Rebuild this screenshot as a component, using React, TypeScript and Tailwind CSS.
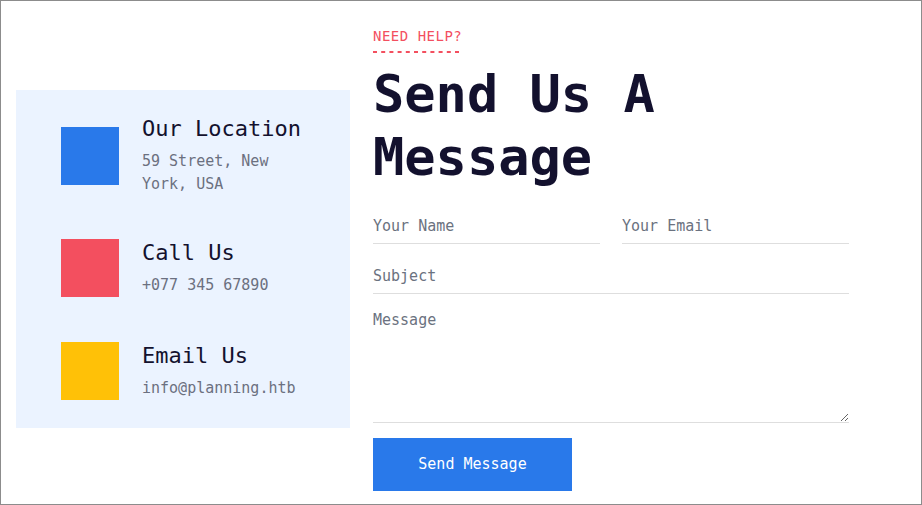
import React from 'react';

const mono = { fontFamily: '"DejaVu Sans Mono", "Liberation Mono", monospace' };

interface InfoItemProps {
  color: string;
  title: string;
  lines: string;
  className?: string;
}

const InfoItem = ({ color, title, lines, className = '' }: InfoItemProps) => (
  <div className={`flex items-center gap-[23px] ${className}`}>
    <div className={`w-[58px] h-[58px] shrink-0 ${color}`} />
    <div className="flex flex-col">
      <h3 className="text-[22px] leading-[28px] text-[#13112e] mb-[7px]">{title}</h3>
      <p className="text-[15px] leading-[23px] text-[#6b7080]">{lines}</p>
    </div>
  </div>
);

const fieldCls =
  'w-full bg-transparent border-b border-[#dedede] text-[15px] text-[#13112e] placeholder:text-[#6b7280] focus:outline-none';

export default function App() {
  return (
    <div
      className="w-[922px] h-[505px] border border-[#8c8c8c] bg-white flex overflow-hidden"
      style={mono}
    >
      <div className="pl-[15px] pt-[89px]">
        <div className="w-[334px] bg-[#ebf3ff] pl-[45px] pr-[45px] pt-[25px] pb-[28px] flex flex-col">
          <InfoItem color="bg-[#2979ea]" title="Our Location" lines="59 Street, New York, USA" />
          <InfoItem className="mt-[43px]" color="bg-[#f34f5f]" title="Call Us" lines="+077 345 67890" />
          <InfoItem className="mt-[45px]" color="bg-[#ffc107]" title="Email Us" lines="info@planning.htb" />
        </div>
      </div>

      <div className="ml-[23px] pt-[25px] w-[476px] flex flex-col">
        <div className="flex flex-col items-start">
          <span className="text-[14px] leading-5 tracking-[0.5px] text-[#f34f5f]">NEED HELP?</span>
          <svg width="90" height="2" className="mt-[5px]">
            <line x1="0" y1="1" x2="90" y2="1" stroke="#f34f5f" strokeWidth="2" strokeDasharray="4 4.2" />
          </svg>
        </div>
        <h1 className="mt-[10px] text-[52px] leading-[63px] font-bold text-[#13112e]">
          Send Us A<br />Message
        </h1>

        <form className="mt-[20px] flex flex-col" onSubmit={(e) => e.preventDefault()}>
          <div className="flex gap-[22px]">
            <input className={`${fieldCls} h-[35px]`} placeholder="Your Name" style={mono} />
            <input className={`${fieldCls} h-[35px]`} placeholder="Your Email" style={mono} />
          </div>
          <input className={`${fieldCls} h-[35px] mt-[15px]`} placeholder="Subject" style={mono} />
          <textarea
            className={`${fieldCls} h-[114px] mt-[15px] leading-[22px] resize-y`}
            placeholder="Message"
            style={mono}
          />
          <button
            type="submit"
            className="mt-[15px] w-[199px] h-[53px] bg-[#2979ea] text-white text-[15px]"
            style={mono}
          >
            Send Message
          </button>
        </form>
      </div>
    </div>
  );
}
